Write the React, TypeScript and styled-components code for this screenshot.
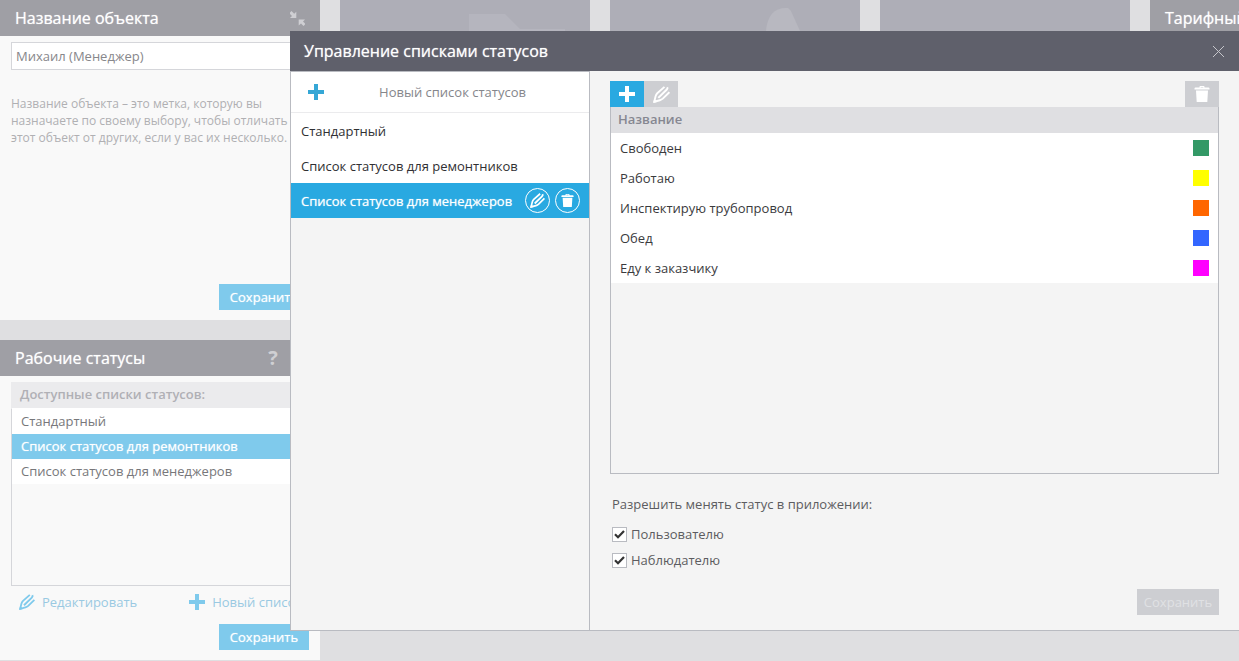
import React, { useState } from "react";
import styled, { createGlobalStyle, css } from "styled-components";

const colors = {
  page: "#dfdfe1",
  accent: "#29a9e1",
  accentPale: "#7fcaec",
  panel: "#f9f9f9",
  panelHead: "#9f9fa5",
  tile: "#aeaeb7",
  dialog: "#f4f4f4",
  dialogHead: "#5f606b",
  line: "#b9bbc1",
  linePale: "#d5d6da",
  disabled: "#cdced2",
};

const GlobalStyle = createGlobalStyle`
  * { box-sizing: border-box; }
  html, body { margin: 0; }
  body {
    background: ${colors.page};
    font: 13px/18px "Open Sans", "Noto Sans", sans-serif;
    overflow: hidden;
  }
  button, input { font: inherit; }
  button { border: 0; padding: 0; cursor: pointer; }
  h2, p, ul { margin: 0; padding: 0; font-weight: 400; }
  ul { list-style: none; }
  svg { display: block; flex: none; }
`;

/* White text on a coloured ground, slightly heavier than the regular weight */
const brightText = css`
  color: #fff;
  text-shadow: 0 0 1px rgba(255, 255, 255, 0.7);
`;

const Page = styled.div`
  position: relative;
  min-height: 100vh;
  overflow: hidden;
`;

const Board = styled.main`
  display: grid;
  grid-template-columns: 320px repeat(3, 250px) 320px;
  align-items: start;
  gap: 20px;
`;

const Column = styled.div`
  display: flex;
  flex-direction: column;
  gap: 20px;
`;

const Panel = styled.section`
  display: flex;
  flex-direction: column;
  min-height: 320px;
  background: ${colors.panel};
`;

const PanelHead = styled.header`
  display: flex;
  align-items: center;
  justify-content: space-between;
  height: 36px;
  padding: 0 15px;
  background: ${colors.panelHead};
`;

const PanelTitle = styled.h2`
  ${brightText}
  font-size: 16px;
  line-height: 24px;
  white-space: nowrap;
`;

const HeadButton = styled.button`
  background: none;
  color: #cfcfd3;
`;

const HelpButton = styled(HeadButton)`
  width: 64px;
  font-size: 20px;
  font-weight: 700;
  line-height: 24px;
`;

const PanelBody = styled.div`
  display: flex;
  flex: 1;
  flex-direction: column;
  padding: 6px 11px 10px;
`;

const NameInput = styled.input`
  height: 28px;
  padding: 0 4px;
  border: 1px solid ${colors.linePale};
  background: #fff;
  color: #87878b;
`;

const Hint = styled.p`
  flex: 1;
  padding-top: 25px;
  color: #b0b0b3;
  font-size: 12px;
  line-height: 17px;
`;

const SaveButton = styled.button`
  ${brightText}
  align-self: flex-end;
  width: 90px;
  height: 26px;
  background: ${colors.accentPale};
`;

const ListCaption = styled.p`
  height: 26px;
  padding: 0 9px;
  background: #ebebed;
  color: #b0b0b5;
  font-weight: 600;
  line-height: 25px;
`;

const PaleList = styled.ul`
  height: 178px;
  border: 1px solid ${colors.linePale};
  border-top-color: #fff;
`;

const PaleItem = styled.li<{ $selected?: boolean }>`
  height: 25px;
  padding: 0 9px;
  background: #fff;
  color: #77777a;
  line-height: 25px;
  ${(p) =>
    p.$selected &&
    css`
      ${brightText}
      background: ${colors.accentPale};
    `}
`;

const LinkRow = styled.div`
  display: flex;
  gap: 52px;
  height: 38px;
  padding: 7px 8px 0;
  white-space: nowrap;
`;

const ActionLink = styled.a`
  display: flex;
  align-items: center;
  gap: 7px;
  height: 18px;
  color: #9ac9e2;
  text-decoration: none;
  svg { color: ${colors.accentPale}; }
`;

const Tile = styled.div`
  height: 250px;
  background: ${colors.tile};
`;

const Dialog = styled.div`
  position: absolute;
  top: 31px;
  right: 0;
  left: 290px;
  display: flex;
  flex-direction: column;
  background: ${colors.dialog};
`;

const DialogHead = styled.header`
  display: flex;
  align-items: center;
  justify-content: space-between;
  height: 40px;
  padding: 0 14px;
  background: ${colors.dialogHead};
`;

const DialogBody = styled.div`
  display: grid;
  grid-template-columns: 300px 1fr;
  min-height: 560px;
  border-bottom: 1px solid ${colors.line};
`;

const Sidebar = styled.nav`
  border: 1px solid ${colors.line};
  border-width: 1px 1px 0;
`;

const NewListButton = styled.button`
  display: grid;
  grid-template-columns: 50px 1fr;
  align-items: center;
  justify-items: center;
  width: 100%;
  height: 41px;
  padding-right: 25px;
  border-bottom: 1px solid #ebebed;
  background: #fff;
  color: #85868b;
  svg { color: #35a7d6; }
`;

const StatusListItem = styled.li<{ $selected?: boolean }>`
  display: flex;
  align-items: center;
  justify-content: space-between;
  height: 35px;
  padding: 0 9px 0 10px;
  background: #fff;
  color: #303033;
  white-space: nowrap;
  ${(p) =>
    p.$selected &&
    css`
      ${brightText}
      background: ${colors.accent};
    `}
`;

const RoundActions = styled.span`
  display: flex;
  gap: 5px;
`;

const RoundButton = styled.button`
  display: grid;
  place-items: center;
  width: 25px;
  height: 25px;
  border: 1px solid #fff;
  border-radius: 50%;
  background: none;
  color: #fff;
`;

const Content = styled.div`
  display: flex;
  flex-direction: column;
  padding: 10px 20px 15px;
`;

const Toolbar = styled.div`
  display: flex;
  height: 26px;
`;

const ToolButton = styled.button<{ $primary?: boolean; $last?: boolean }>`
  display: grid;
  place-items: center;
  width: 34px;
  margin-left: ${(p) => (p.$last ? "auto" : 0)};
  background: ${(p) => (p.$primary ? colors.accent : colors.disabled)};
  color: #fff;
`;

const TableFrame = styled.div`
  height: 367px;
  border: 1px solid ${colors.line};
  border-top: 0;
`;

const StatusTable = styled.table`
  width: 100%;
  border-collapse: collapse;
  background: #fff;
  th, td { padding: 0 9px; text-align: left; }
  th {
    height: 26px;
    padding: 0 7px 2px;
    background: #dfdfe2;
    color: #868791;
    font-weight: 600;
  }
  td { height: 30px; color: #3a3a3d; }
`;

const Swatch = styled.span<{ $color: string }>`
  display: block;
  width: 16px;
  height: 16px;
  margin-left: auto;
  background: ${(p) => p.$color};
`;

const Permissions = styled.fieldset`
  display: flex;
  flex: 1;
  flex-direction: column;
  gap: 8px;
  margin: 0;
  padding: 21px 2px 0;
  border: 0;
  color: #5c5c60;
`;

const PermissionsTitle = styled.p`
  padding-bottom: 4px;
`;

const CheckLabel = styled.label`
  display: flex;
  align-items: center;
  gap: 4px;
`;

const CheckMark = styled.span`
  display: grid;
  place-items: center;
  width: 15px;
  height: 15px;
  input, svg { grid-area: 1 / 1; }
  svg { pointer-events: none; visibility: hidden; }
  input:checked + svg { visibility: visible; }
`;

const CheckInput = styled.input`
  width: 15px;
  height: 15px;
  margin: 0;
  border: 1px solid ${colors.line};
  background: #fff;
  appearance: none;
`;

const DisabledSave = styled.button`
  align-self: flex-end;
  width: 82px;
  height: 26px;
  background: ${colors.disabled};
  color: #e0e1e4;
`;

const PlusIcon = ({ size = 16 }: { size?: number }) => (
  <svg width={size} height={size} viewBox="0 0 16 16" fill="currentColor" aria-hidden="true">
    <path d="M6 0h4v6h6v4h-6v6H6v-6H0V6h6z" />
  </svg>
);

const PencilIcon = ({ size = 17 }: { size?: number }) => (
  <svg width={size} height={size} viewBox="0 0 16 16" fill="none" stroke="currentColor" strokeWidth="1.8" aria-hidden="true">
    <path d="M10.800.8 4 6.800Q2.800 8 2.400 9.800L1.200 14.800 6.400 13.400Q8 13 9.200 11.900L15.400 5.800" strokeLinejoin="round" />
    <path d="M5 11.200 12.800 3.600Q14 2.400 13.400 1.200" strokeWidth="1.900" />
    <path d="M0 16 1.200 12.200 3.900 15z" fill="currentColor" stroke="none" />
  </svg>
);

const TrashIcon = ({ size = 16 }: { size?: number }) => (
  <svg width={size} height={size} viewBox="0 0 16 16" fill="currentColor" aria-hidden="true">
    <path d="M5.500 1.600V.8Q5.500 0 6.300 0h3.400q.8 0 .8.800v.8h4q1 0 1 1v1H.5v-1q0-1 1-1zm1.200 0h2.600V1H6.700zM2 4.600h12L13.300 16H2.700z" />
  </svg>
);

const CollapseIcon = () => (
  <svg width="15" height="15" viewBox="0 0 15 15" fill="currentColor" aria-hidden="true">
    <path d="M0 1.500 1.500 0 4.200 2.700 6.300.700V7H0L2 5 0 3zM15 13.500 13.500 15 11 12.400 8.700 14.500V8.500H15L13 10.500 15 12.500z" />
  </svg>
);

const CloseIcon = () => (
  <svg width="13" height="13" viewBox="0 0 13 13" fill="none" stroke="#c6c6cb" aria-hidden="true">
    <path d="M1 1 12 12M12 1 1 12" />
  </svg>
);

const TickIcon = () => (
  <svg width="11" height="11" viewBox="0 0 11 11" fill="none" stroke="#333" strokeWidth="2.200" aria-hidden="true">
    <path d="M1 5.200 4 8.200 10 2" />
  </svg>
);

const DocumentMark = () => (
  <svg width="250" height="120" viewBox="0 0 250 120" fill="#b5b5be" aria-hidden="true">
    <path d="M129 14h36l15 15h45v91h-96z" />
  </svg>
);

const BellMark = () => (
  <svg width="250" height="120" viewBox="0 0 250 120" fill="#b8b8c0" aria-hidden="true">
    <path d="M156 31Q158 8 176 8h2l3 3 9 20v89h-34z" />
  </svg>
);

const paleLists = ["Стандартный", "Список статусов для ремонтников", "Список статусов для менеджеров"];

const statuses = [
  { name: "Свободен", color: "#339966" },
  { name: "Работаю", color: "#ffff00" },
  { name: "Инспектирую трубопровод", color: "#ff6600" },
  { name: "Обед", color: "#3366ff" },
  { name: "Еду к заказчику", color: "#ff00ff" },
];

function Permission({ label }: { label: string }) {
  const [checked, setChecked] = useState(true);
  return (
    <CheckLabel>
      <CheckMark>
        <CheckInput type="checkbox" checked={checked} onChange={() => setChecked(!checked)} />
        <TickIcon />
      </CheckMark>
      {label}
    </CheckLabel>
  );
}

export default function App() {
  const [name, setName] = useState("Михаил (Менеджер)");
  return (
    <Page>
      <GlobalStyle />
      <Board>
        <Column>
          <Panel>
            <PanelHead>
              <PanelTitle>Название объекта</PanelTitle>
              <HeadButton aria-label="Свернуть"><CollapseIcon /></HeadButton>
            </PanelHead>
            <PanelBody>
              <NameInput aria-label="Название объекта" value={name} onChange={(e) => setName(e.target.value)} />
              <Hint>
                Название объекта – это метка, которую вы назначаете по своему выбору, чтобы отличать этот объект от
                других, если у вас их несколько.
              </Hint>
              <SaveButton>Сохранить</SaveButton>
            </PanelBody>
          </Panel>
          <Panel>
            <PanelHead>
              <PanelTitle>Рабочие статусы</PanelTitle>
              <HelpButton aria-label="Справка">?</HelpButton>
            </PanelHead>
            <PanelBody>
              <ListCaption>Доступные списки статусов:</ListCaption>
              <PaleList>
                {paleLists.map((item, i) => (
                  <PaleItem key={item} $selected={i === 1}>{item}</PaleItem>
                ))}
              </PaleList>
              <LinkRow>
                <ActionLink href="#edit"><PencilIcon size={16} />Редактировать</ActionLink>
                <ActionLink href="#new"><PlusIcon />Новый список</ActionLink>
              </LinkRow>
              <SaveButton>Сохранить</SaveButton>
            </PanelBody>
          </Panel>
        </Column>
        <Tile><DocumentMark /></Tile>
        <Tile><BellMark /></Tile>
        <Tile />
        <Panel>
          <PanelHead><PanelTitle>Тарифный план</PanelTitle></PanelHead>
        </Panel>
      </Board>

      <Dialog role="dialog" aria-labelledby="dialog-title">
        <DialogHead>
          <PanelTitle id="dialog-title">Управление списками статусов</PanelTitle>
          <HeadButton aria-label="Закрыть"><CloseIcon /></HeadButton>
        </DialogHead>
        <DialogBody>
          <Sidebar>
            <NewListButton><PlusIcon /><span>Новый список статусов</span></NewListButton>
            <ul>
              <StatusListItem>Стандартный</StatusListItem>
              <StatusListItem>Список статусов для ремонтников</StatusListItem>
              <StatusListItem $selected>
                Список статусов для менеджеров
                <RoundActions>
                  <RoundButton aria-label="Редактировать список"><PencilIcon size={15} /></RoundButton>
                  <RoundButton aria-label="Удалить список"><TrashIcon size={13} /></RoundButton>
                </RoundActions>
              </StatusListItem>
            </ul>
          </Sidebar>
          <Content>
            <Toolbar>
              <ToolButton $primary aria-label="Добавить"><PlusIcon /></ToolButton>
              <ToolButton aria-label="Изменить"><PencilIcon /></ToolButton>
              <ToolButton $last aria-label="Удалить"><TrashIcon /></ToolButton>
            </Toolbar>
            <TableFrame>
              <StatusTable>
                <thead>
                  <tr><th colSpan={2}>Название</th></tr>
                </thead>
                <tbody>
                  {statuses.map((s) => (
                    <tr key={s.name}>
                      <td>{s.name}</td>
                      <td><Swatch $color={s.color} /></td>
                    </tr>
                  ))}
                </tbody>
              </StatusTable>
            </TableFrame>
            <Permissions>
              <PermissionsTitle>Разрешить менять статус в приложении:</PermissionsTitle>
              <Permission label="Пользователю" />
              <Permission label="Наблюдателю" />
            </Permissions>
            <DisabledSave disabled>Сохранить</DisabledSave>
          </Content>
        </DialogBody>
      </Dialog>
    </Page>
  );
}
